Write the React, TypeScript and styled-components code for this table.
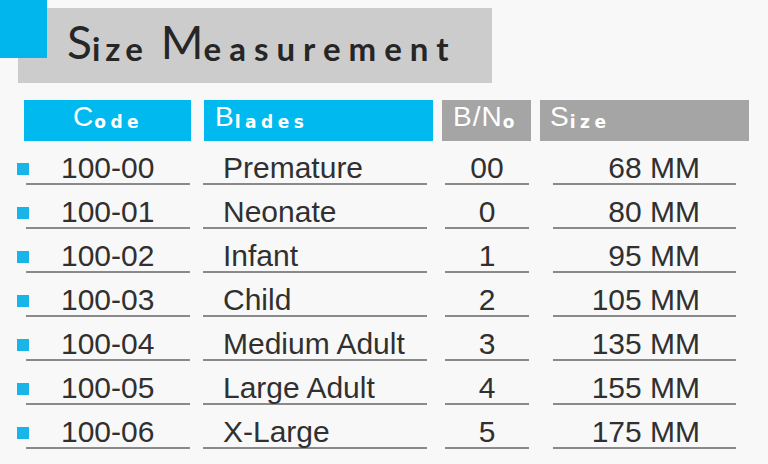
import React, {FC} from 'react';
import styled, {createGlobalStyle} from 'styled-components';

const GlobalStyle = createGlobalStyle`
  html, body {
    margin: 0;
    padding: 0;
    background: #f8f8f8;
  }
`

const Page = styled.main`
  width: 768px;
  height: 464px;
  overflow: hidden;
  font-family: "Liberation Sans", Arial, sans-serif;
`

const TitleWrap = styled.div`
  position: relative;
  padding: 8px 0 0 18px;

  > .accent {
    position: absolute;
    z-index: 2;
    left: 0;
    top: 0;
    width: 47px;
    height: 58px;
    background: #00b6ed;
  }
`

const TitleBar = styled.h1`
  box-sizing: border-box;
  margin: 0;
  width: 474px;
  height: 75px;
  padding: 0 0 18px 49px;
  display: flex;
  align-items: flex-end;
  background: #cccccc;
  color: #262626;
  font-family: Lato, "DejaVu Sans", sans-serif;
  font-weight: 400;
  line-height: 1;
  white-space: pre;
`

const Big = styled.span<{size: number}>`
  font-size: ${p => p.size}px;
  font-weight: 400;
`

const Small = styled.span<{size: number; spacing: number}>`
  font-size: ${p => p.size}px;
  letter-spacing: ${p => p.spacing}px;
  font-weight: 700;
`

const Table = styled.div`
  display: grid;
  grid-template-columns: 171px 229px 89px 209px;
  column-gap: 9px;
  margin: 17px 0 0 24px;
`

const Head = styled.div<{tone: 'blue' | 'gray'; w?: number; pad: number}>`
  box-sizing: border-box;
  width: ${p => (p.w ? `${p.w}px` : '100%')};
  height: 41px;
  padding: 0 0 10px ${p => p.pad}px;
  display: flex;
  align-items: flex-end;
  background: ${p => (p.tone === 'blue' ? '#00b9ef' : '#a5a5a5')};
  color: #ffffff;
  line-height: 1;
  white-space: pre;

  > .cap {
    font-family: "Liberation Sans", Arial, sans-serif;
    font-size: 28px;
    letter-spacing: 1px;
  }

  > .low {
    font-family: "DejaVu Sans", sans-serif;
    font-weight: 700;
    font-size: 17px;
    letter-spacing: 4.5px;
  }
`

const Cell = styled.div<{ml: number; mr: number; align: 'left' | 'center' | 'right'; pl?: number; pr?: number}>`
  position: relative;
  box-sizing: border-box;
  height: 44px;
  margin: 0 ${p => p.mr}px 0 ${p => p.ml}px;
  padding: 0 ${p => p.pr || 0}px 0 ${p => p.pl || 0}px;
  display: flex;
  align-items: flex-end;
  justify-content: ${p => (p.align === 'left' ? 'flex-start' : p.align === 'right' ? 'flex-end' : 'center')};
  border-bottom: 2px solid #8a8a8a;
  color: #303030;
  font-size: 30px;
  line-height: 1;
  white-space: nowrap;
`

const Bullet = styled.span`
  position: absolute;
  left: -9px;
  bottom: 8px;
  width: 12px;
  height: 12px;
  background: #19b4e8;
`

const rows = [
  {code: '100-00', blade: 'Premature', no: '00', size: '68 MM'},
  {code: '100-01', blade: 'Neonate', no: '0', size: '80 MM'},
  {code: '100-02', blade: 'Infant', no: '1', size: '95 MM'},
  {code: '100-03', blade: 'Child', no: '2', size: '105 MM'},
  {code: '100-04', blade: 'Medium Adult', no: '3', size: '135 MM'},
  {code: '100-05', blade: 'Large Adult', no: '4', size: '155 MM'},
  {code: '100-06', blade: 'X-Large', no: '5', size: '175 MM'},
]

const App: FC = () => {
  return (
    <Page>
      <GlobalStyle />
      <TitleWrap>
        <div className="accent" />
        <TitleBar>
          <Big size={46}>S</Big>
          <Small size={33} spacing={5}>ize </Small>
          <Big size={46}>M</Big>
          <Small size={33} spacing={8}>easurement</Small>
        </TitleBar>
      </TitleWrap>
      <Table>
        <Head tone="blue" w={167} pad={49}>
          <span className="cap">C</span>
          <span className="low">ode</span>
        </Head>
        <Head tone="blue" pad={11}>
          <span className="cap">B</span>
          <span className="low">lades</span>
        </Head>
        <Head tone="gray" pad={11}>
          <span className="cap">B/N</span>
          <span className="low">o</span>
        </Head>
        <Head tone="gray" pad={10}>
          <span className="cap">S</span>
          <span className="low">ize</span>
        </Head>
        {rows.map(r => (
          <React.Fragment key={r.code}>
            <Cell ml={2} mr={5} align="left" pl={35}>
              <Bullet />
              {r.code}
            </Cell>
            <Cell ml={-1} mr={6} align="left" pl={20}>{r.blade}</Cell>
            <Cell ml={3} mr={2} align="center">{r.no}</Cell>
            <Cell ml={13} mr={13} align="right" pr={36}>{r.size}</Cell>
          </React.Fragment>
        ))}
      </Table>
    </Page>
  )
}

export default App
